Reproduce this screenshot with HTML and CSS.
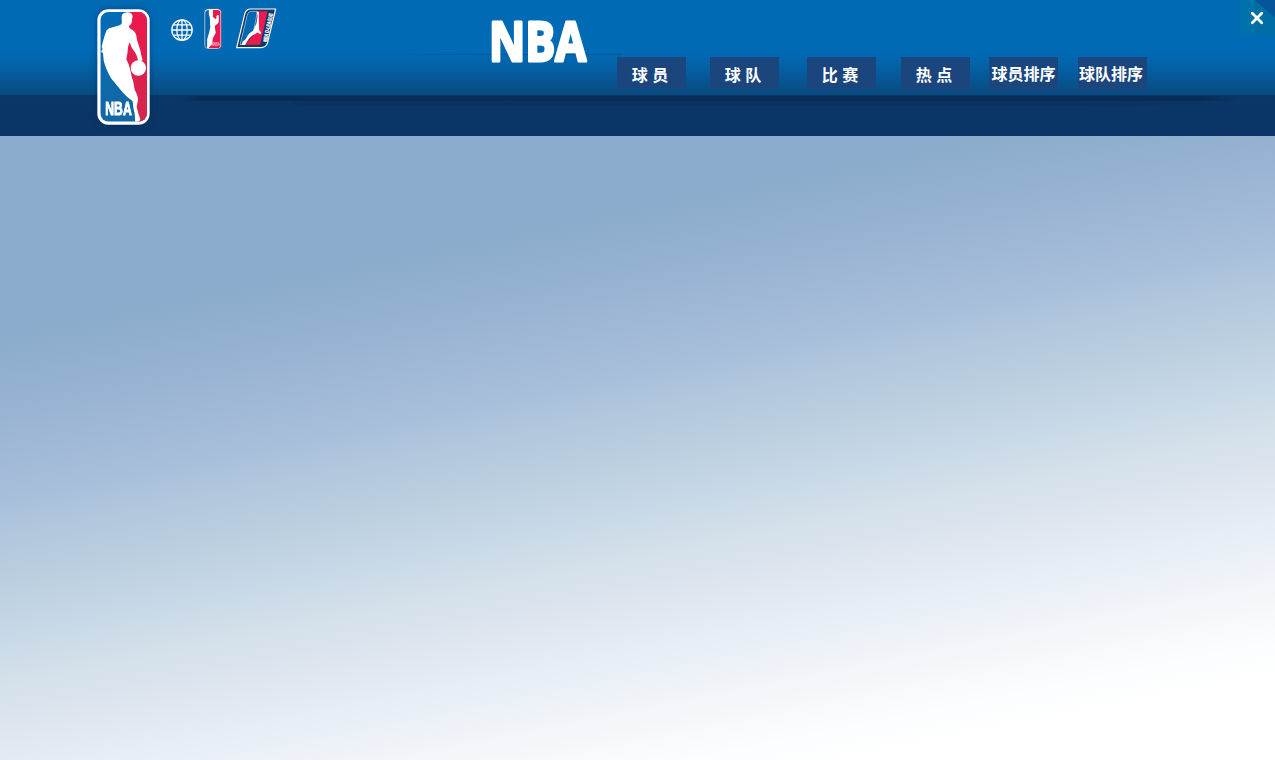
FILE: index.html
```html
<!DOCTYPE html>
<html lang="zh-CN">
<head>
<meta charset="utf-8">
<title>NBA</title>
<link rel="stylesheet" href="styles.css">
</head>
<body>
<header class="header">
  <svg class="logo" viewBox="36 27 159 348" role="img" aria-label="NBA">
    <defs>
      <clipPath id="badge"><rect x="46" y="36" width="140" height="329" rx="25"/></clipPath>
      <linearGradient id="badge-blue" x1="0" y1="0" x2="0" y2="1"><stop offset="0" stop-color="#006bb5"/><stop offset="1" stop-color="#1467a5"/></linearGradient>
      <linearGradient id="badge-red" x1="0" y1="0" x2="0" y2="1"><stop offset="0" stop-color="#ed174c"/><stop offset="1" stop-color="#d22850"/></linearGradient>
    </defs>
    <rect x="37" y="28" width="157" height="346" rx="33" fill="#fff"/>
    <g clip-path="url(#badge)">
      <rect x="46" y="36" width="140" height="329" fill="url(#badge-blue)"/>
      <path fill="url(#badge-red)" d="M130 36H186V365H158L118 180Z"/>
      <path fill="#fff" d="M110 48Q112 39 125 37Q141 36 143 49Q141 55 141 64Q139 75 132 77Q132 86 143 90Q154 96 156 120L166 151Q168 166 173 181L160 185Q157 165 145 150Q138 141 134 126Q127 143 128 155L124 178Q134 196 139 226Q146 245 149 269Q159 287 159 300L155 320Q160 342 166 358L162 365H150Q151 343 145 323L143 304Q128 293 114 278L78 235Q61 205 56 181L54 159Q44 154 53 148L50 141Q57 109 65 91Q70 84 83 82L104 76Q113 73 110 61Z"/>
      <circle cx="160" cy="204" r="23" fill="#fff"/>
      <text x="61" y="344" class="logo-name" textLength="79" lengthAdjust="spacingAndGlyphs">NBA</text>
    </g>
  </svg>
  <div class="leagues">
    <svg class="globe" viewBox="0 0 22 22" fill="none" stroke="#fff" stroke-width="1.3" aria-label="Global">
      <circle cx="11" cy="11" r="10.2"/><ellipse cx="11" cy="11" rx="5.2" ry="10.2"/><path d="M11 1V21M1 11H21M2.8 5.8H19.2M2.8 16.2H19.2"/>
    </svg>
    <svg class="wnba" viewBox="130 23 57 126" role="img" aria-label="WNBA">
      <rect x="132" y="25" width="52" height="121" rx="12" fill="#fff" stroke="#174e83" stroke-width="2"/>
      <path fill="#0068b3" d="M145 29H152L150 60Q153 80 147 96L141 117V143Q135 143 135 134V40Q135 29 145 29Z"/>
      <path fill="#e91950" d="M158 29H172Q181 29 181 39V133Q181 143 172 143H145Q153 132 153 125L162 103Q168 91 163 78L175 67L176 46L171 43L168 57L158 51Z"/>
      <path fill="#fff" d="M146 30Q151 25 157 30L159 41L154 51Q164 50 164 60L170 57L169 46L175 45L174 64L163 76Q164 86 167 97L158 113L156 130L145 143H140L149 123L151 104Q156 87 150 73L149 53L146 41Z"/>
      <text class="wnba-name" x="153" y="138" textLength="26" lengthAdjust="spacingAndGlyphs">WNBA</text>
    </svg>
    <svg class="dleague" viewBox="230 25 122 122" role="img" aria-label="NBA D-League">
      <path fill="#123866" stroke="#fff" stroke-width="3.5" stroke-linejoin="round" d="M274 28H348L324 128Q319 143 304 143H232L256 43Q260 28 274 28Z"/>
      <path fill="#0068b3" stroke="#fff" stroke-width="1.5" d="M275 35H294L281 101L247 134H242L263 48Q266 35 275 35Z"/>
      <path fill="#ee194d" d="M293 35H324L302 134H252Q264 127 276 112L289 100L296 68Z"/>
      <path fill="#fff" d="M291 36L298 36L298 60L299 91L305 98L303 103L294 98L279 107Q268 114 257 135H246L250 125L259 117Q269 98 281 93L291 70L294 49Z"/>
      <text class="dleague-name" transform="translate(322 127) rotate(-78)" textLength="87" lengthAdjust="spacingAndGlyphs">NBA D-LEAGUE</text>
    </svg>
  </div>
  <svg class="wordmark" viewBox="0 0 98 43" role="img" aria-label="NBA">
    <text x="-2" y="40.5" textLength="97" lengthAdjust="spacingAndGlyphs">NBA</text>
  </svg>
  <nav class="nav">
    <a class="tab tab-players">球 员</a>
    <a class="tab tab-teams">球 队</a>
    <a class="tab tab-games">比 赛</a>
    <a class="tab tab-hot">热 点</a>
    <a class="tab tab-rank">球员排序</a>
    <a class="tab tab-rank">球队排序</a>
  </nav>
  <button class="close" aria-label="关闭">
    <svg viewBox="0 0 14 14" fill="none" stroke="#fff" stroke-width="2.8" stroke-linecap="round"><path d="M2.3 2.3L11.7 11.7M11.7 2.3L2.3 11.7"/></svg>
  </button>
</header>
<main class="content"></main>
</body>
</html>
```
FILE: styles.css
```css
* { box-sizing: border-box; }
body {
  margin: 0;
  height: 100vh;
  display: flex;
  flex-direction: column;
  overflow: hidden;
  font-family: "Liberation Sans", "Noto Sans CJK SC", sans-serif;
}
.header {
  height: 136px;
  flex: none;
  display: flex;
  align-items: flex-start;
  padding-left: 97px;
  background:
    linear-gradient(90deg, transparent 180px, rgba(5, 40, 76, .65) 200px, rgba(5, 40, 76, .65) 1200px, transparent 1242px) 0 96px / 100% 5px no-repeat,
    linear-gradient(90deg, transparent 290px, rgba(5, 40, 76, .3) 300px, rgba(5, 40, 76, .3) 1080px, transparent 1220px) 0 101px / 100% 5px no-repeat,
    linear-gradient(90deg, transparent 380px, rgba(5, 70, 130, .5) 480px, rgba(5, 70, 130, .5) 622px, transparent 623px) 0 54px / 100% 1px no-repeat,
    linear-gradient(#006ab4 0, #006ab5 52px, #0362a7 66px, #07518b 86px, #094a80 95px, #0a3768 95px, #0a3566 100%);
}
.logo {
  width: 53px;
  height: 116px;
  margin-top: 9px;
  filter: drop-shadow(0 0 3px rgba(0, 35, 75, .5));
}
.logo-name { font: bold 57px "Liberation Sans", sans-serif; fill: #fff; stroke: #fff; stroke-width: 3px; }
.leagues {
  width: 341px;
  padding-left: 21px;
  display: flex;
  align-items: flex-start;
}
.globe { width: 22px; height: 22px; margin-top: 19px; }
.wnba { width: 20px; height: 42px; margin: 8px 0 0 10px; overflow: visible; }
.wnba-name { font: bold 15px "Liberation Sans", sans-serif; fill: #fbc4d0; }
.dleague { width: 41px; height: 41px; margin: 8px 0 0 13px; overflow: visible; }
.dleague-name { font: bold 17px "Liberation Sans", sans-serif; fill: #fff; stroke: #fff; stroke-width: .8px; }
.wordmark {
  width: 98px;
  height: 43px;
  margin-top: 20px;
  overflow: visible;
}
.wordmark text {
  font: bold 53px "Open Sans", sans-serif;
  fill: #fff;
  stroke: #fff;
  stroke-width: 3px;
  stroke-linejoin: round;
}
.nav {
  display: flex;
  padding: 57px 0 0 28px;
}
.tab {
  width: 69px;
  height: 32px;
  padding-right: 3px;
  background: #1a467d;
  color: #fff;
  font: bold 16px/35px "Noto Sans CJK SC", sans-serif;
  word-spacing: 1px;
  text-align: center;
  white-space: nowrap;
}
.tab-teams { margin-left: 24px; }
.tab-games { margin-left: 28px; }
.tab-hot { margin-left: 25px; height: 33px; }
.tab-rank { margin-left: 19px; height: 33px; padding-right: 0; line-height: 33px; }
.tab-rank + .tab-rank { margin-left: 20px; padding-right: 3px; }
.close {
  width: 35px;
  height: 35px;
  margin-left: auto;
  padding: 1px 1px 0 0;
  border: 0;
  display: flex;
  align-items: center;
  justify-content: center;
  background:
    linear-gradient(40deg, transparent 66%, #07549a 67%) 15px 0 / 20px 35px no-repeat,
    linear-gradient(90deg, #0071ab 15px, #006da4 15px);
}
.close svg { width: 14px; height: 14px; }
.content {
  flex: 1;
  background: linear-gradient(168.7deg, #8aabcb 0, #8aabcb 21%, #92b0cf 28%, #9cb6d3 34%, #a8bfdb 41.5%, #b1c8dd 46%, #b9cddf 50%, #c6d8e6 56.5%, #d3e0ea 62%, #dce4ee 66.5%, #e6edf5 73%, #f2f5f9 80%, #fcfdfe 87%, #fff 91%);
}
```
